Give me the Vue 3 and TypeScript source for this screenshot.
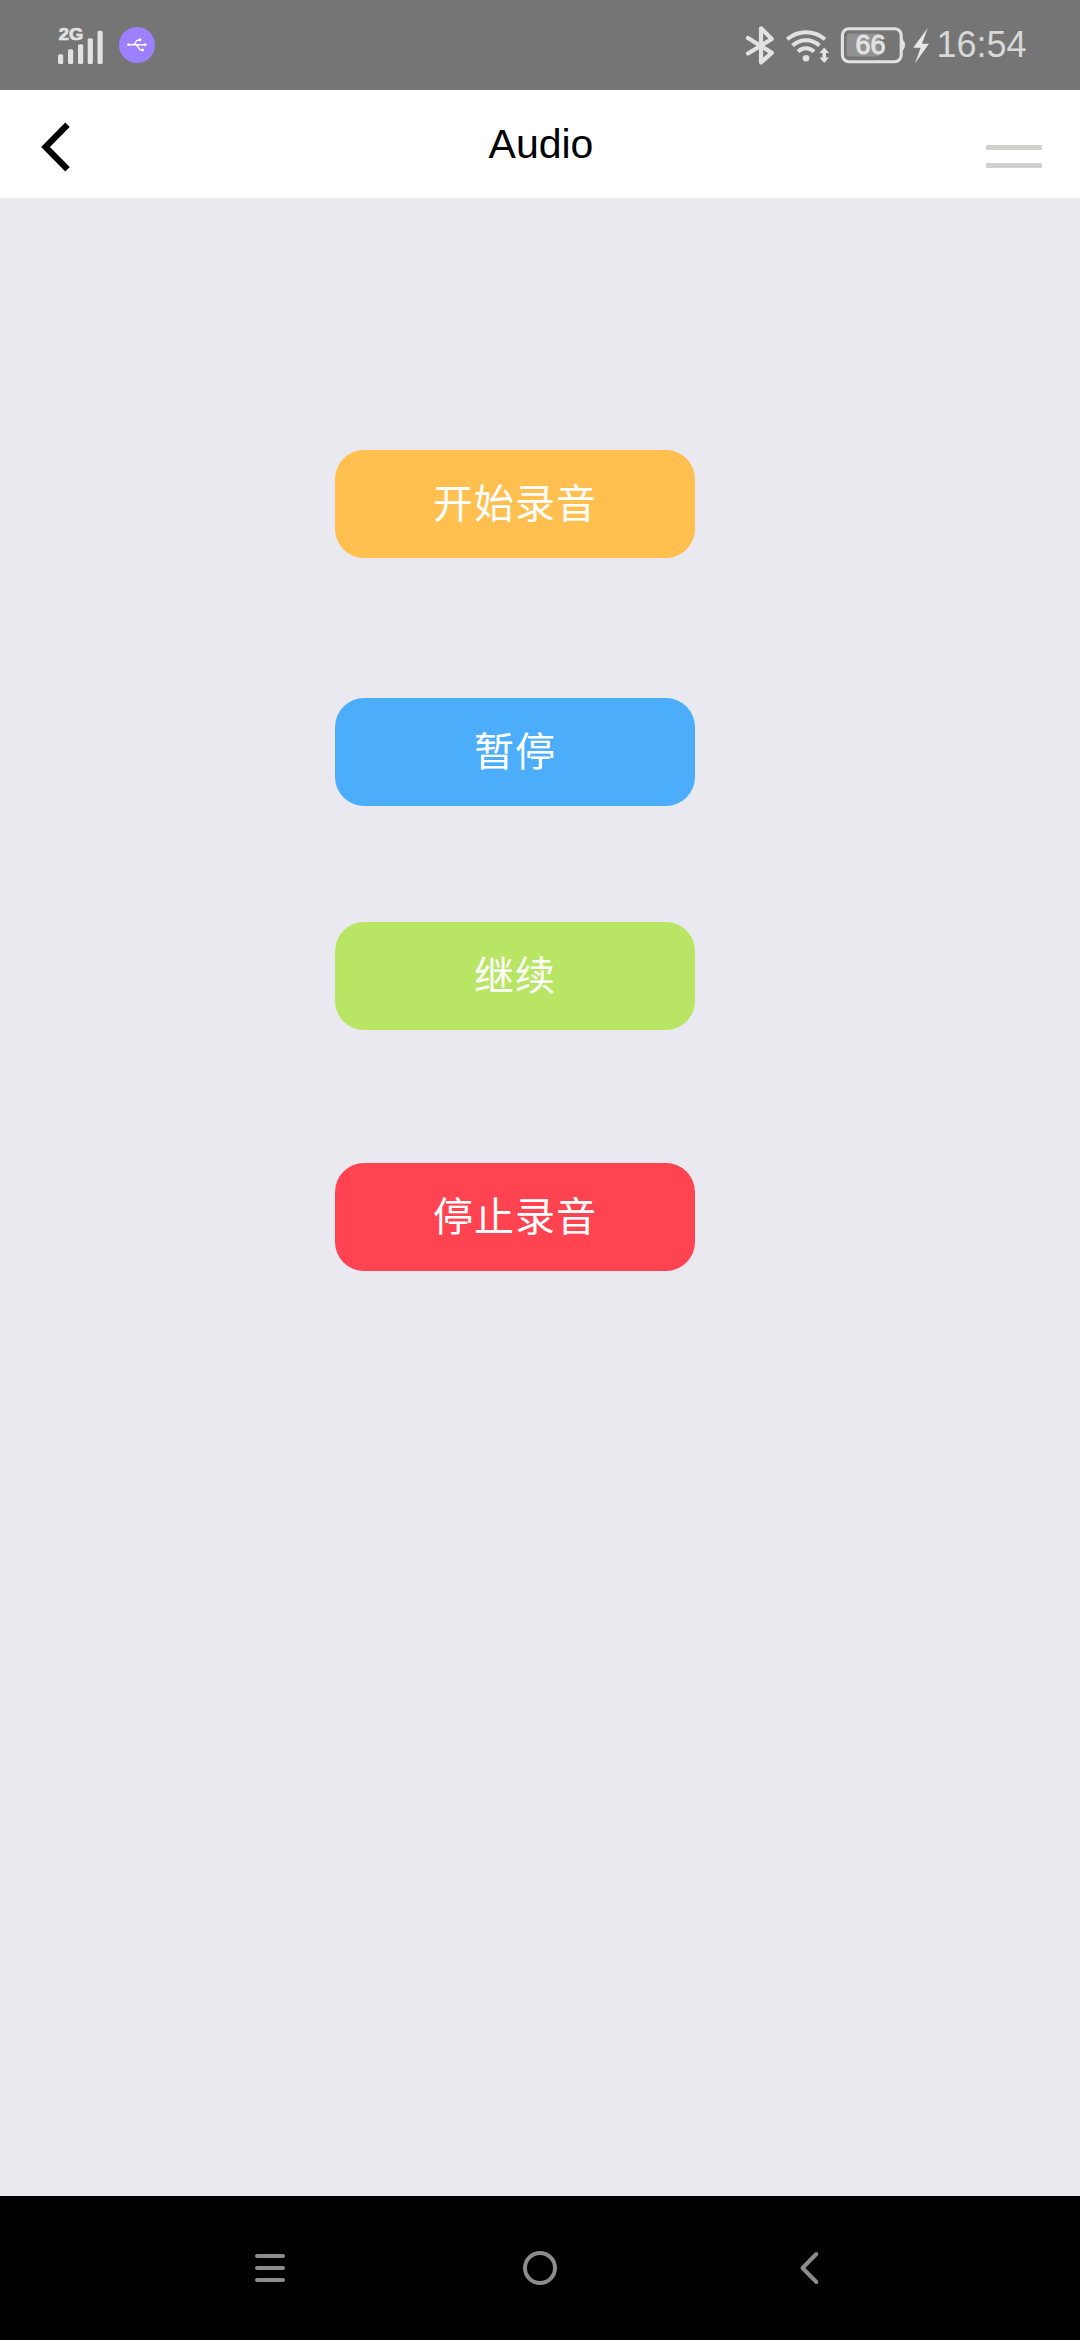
<script setup lang="ts">
interface AudioAction {
  key: string
  label: string
}

const actions: AudioAction[] = [
  { key: 'start', label: '开始录音' },
  { key: 'pause', label: '暂停' },
  { key: 'resume', label: '继续' },
  { key: 'stop', label: '停止录音' },
]
</script>

<template>
  <div class="screen">
    <header class="status">
      <svg class="signal" viewBox="58 0 46 90" width="46" height="90">
        <text x="58.7" y="39.7" textLength="24.5" lengthAdjust="spacingAndGlyphs">2G</text>
        <rect x="58" y="54.3" width="5.2" height="9.7" rx="1.5" />
        <rect x="68" y="49.3" width="5.2" height="14.7" rx="1.5" />
        <rect x="78" y="44.3" width="5.2" height="19.7" rx="1.5" />
        <rect x="87.7" y="38.3" width="5.2" height="25.7" rx="1.5" />
        <rect x="97.5" y="30.7" width="5.2" height="33.3" rx="1.5" />
      </svg>
      <svg class="usb" viewBox="119 27 36 36" width="36" height="36">
        <circle cx="137" cy="45" r="18" fill="#9c80ff" />
        <g fill="none" stroke="#fff" stroke-width="1.4">
          <path d="M128 44.7H146M133 44.7C136 44.7 135 40 138.5 40H140M136 44.7C138.500 45.200 138 50 141 50H142.500" />
        </g>
        <g fill="#fff">
          <circle cx="128.600" cy="44.700" r="1.400" />
          <circle cx="140" cy="39.700" r="1.500" />
          <rect x="141.300" y="48.800" width="2.500" height="2.500" />
          <path d="M144.500 42.700L147.200 44.700L144.500 46.700Z" />
        </g>
      </svg>
      <span class="spacer"></span>
      <svg viewBox="744 0 186 90" width="186" height="90">
        <path d="M748 38L771.800 52.800L761 62.300V28.300L771.800 39L748 53.500" fill="none" stroke="#e2e2e2" stroke-width="4.200" stroke-linecap="round" stroke-linejoin="round" />
        <g fill="none" stroke="#e2e2e2" stroke-width="4">
          <path d="M787.200 39.300Q795.500 32.300 806 32.300T825 39.300" />
          <path d="M792.500 45.500Q798.500 40.300 806 40.300T819.500 45.500" />
          <path d="M798 51.700Q801.500 48.200 806 48.200T814 51.700" />
        </g>
        <circle cx="806" cy="58.300" r="3.300" fill="#e2e2e2" />
        <path d="M824.200 47.500L829 53H826V57.500H829L824.200 63L819.400 57.500H822.400V53H819.400Z" fill="#e2e2e2" />
        <rect x="846.700" y="33.500" width="33" height="23" rx="3" fill="#929292" />
        <rect x="842.400" y="28.700" width="58.800" height="33" rx="6.500" fill="none" stroke="#e2e2e2" stroke-width="3.100" />
        <path d="M902 38.500Q905.200 42 905.200 45T902 51.500Z" fill="#e2e2e2" />
        <text class="level" x="855.500" y="54">66</text>
        <path d="M927.700 28L913.200 47.700H920.700L915 63.300L929 43.700H922Z" fill="#e8e8e8" />
      </svg>
      <time class="clock">16:54</time>
    </header>

    <nav class="topbar">
      <button class="icon-button" aria-label="Back">
        <svg viewBox="38 119 34 56" width="34" height="56">
          <path d="M67.500 124.700L45.500 147L67.500 169.300" fill="none" stroke="#000" stroke-width="6.200" stroke-linecap="butt" stroke-linejoin="miter" />
        </svg>
      </button>
      <h1>Audio</h1>
      <button class="icon-button menu" aria-label="Menu">
        <i></i>
        <i></i>
      </button>
    </nav>

    <main class="content">
      <button v-for="action in actions" :key="action.key" class="action" :class="action.key">
        {{ action.label }}
      </button>
    </main>

    <footer class="system">
      <svg viewBox="0 0 36 36" width="36" height="36">
        <path d="M5 6H31M5 18H31M5 30H31" />
      </svg>
      <svg viewBox="0 0 36 36" width="36" height="36">
        <circle cx="18" cy="18" r="15" />
      </svg>
      <svg viewBox="0 0 36 36" width="36" height="36">
        <path d="M24.300 4L10.500 18L24.300 32" />
      </svg>
    </footer>
  </div>
</template>

<style>
body {
  margin: 0;
}
</style>

<style scoped>
.screen {
  display: flex;
  flex-direction: column;
  width: 1080px;
  height: 2340px;
  overflow: hidden;
  background: #e9e9ef;
  font-family: 'Liberation Sans', 'Noto Sans CJK SC', sans-serif;
}
button {
  margin: 0;
  padding: 0;
  border: 0;
  background: none;
  font: inherit;
}
svg {
  display: block;
  flex: none;
}
.status {
  display: flex;
  flex: none;
  align-items: center;
  box-sizing: border-box;
  height: 90px;
  padding: 0 53px 0 58px;
  background: #757575;
}
.signal {
  fill: #e2e2e2;
}
.signal text {
  font-size: 17px;
  font-weight: bold;
  stroke: #e2e2e2;
  stroke-width: 0.7px;
}
.usb {
  margin-left: 15px;
}
.spacer {
  flex: 1;
}
.level {
  fill: #e2e2e2;
  stroke: #e2e2e2;
  stroke-width: 1px;
  font-size: 27px;
}
.clock {
  width: 90.5px;
  margin-left: 6.5px;
  color: #d8d8d8;
  font-size: 36px;
  line-height: 90px;
  white-space: nowrap;
}
.topbar {
  display: flex;
  flex: none;
  align-items: center;
  justify-content: space-between;
  box-sizing: border-box;
  height: 108px;
  padding: 0 38px;
  background: #fff;
}
.icon-button {
  width: 56px;
  padding-top: 6px;
}
.topbar h1 {
  margin: 0;
  padding-left: 2px;
  color: #000;
  font-size: 41px;
  font-weight: 400;
  line-height: 108px;
}
.menu {
  display: flex;
  flex-direction: column;
  gap: 13px;
  padding-top: 24px;
}
.menu i {
  height: 5px;
  border-radius: 1px;
  background: #cfd1cf;
}
.content {
  display: flex;
  flex: 1;
  flex-direction: column;
  align-items: flex-start;
  padding: 252px 0 0 335px;
}
.action {
  width: 360px;
  height: 108px;
  border-radius: 29px;
  color: #fff;
  font-size: 40px;
  letter-spacing: 1px;
  line-height: 109px;
}
.start {
  background: #ffc04f;
}
.pause {
  margin-top: 140px;
  background: #4caefb;
}
.resume {
  margin-top: 116px;
  background: #b8e664;
}
.stop {
  margin-top: 133px;
  background: #ff4351;
}
.system {
  display: flex;
  flex: none;
  align-items: center;
  justify-content: space-between;
  box-sizing: border-box;
  height: 144px;
  padding: 0 252px;
  background: #000;
}
.system svg {
  fill: none;
  stroke: #8c8c8c;
  stroke-width: 4;
  stroke-linecap: round;
  stroke-linejoin: round;
}
</style>
